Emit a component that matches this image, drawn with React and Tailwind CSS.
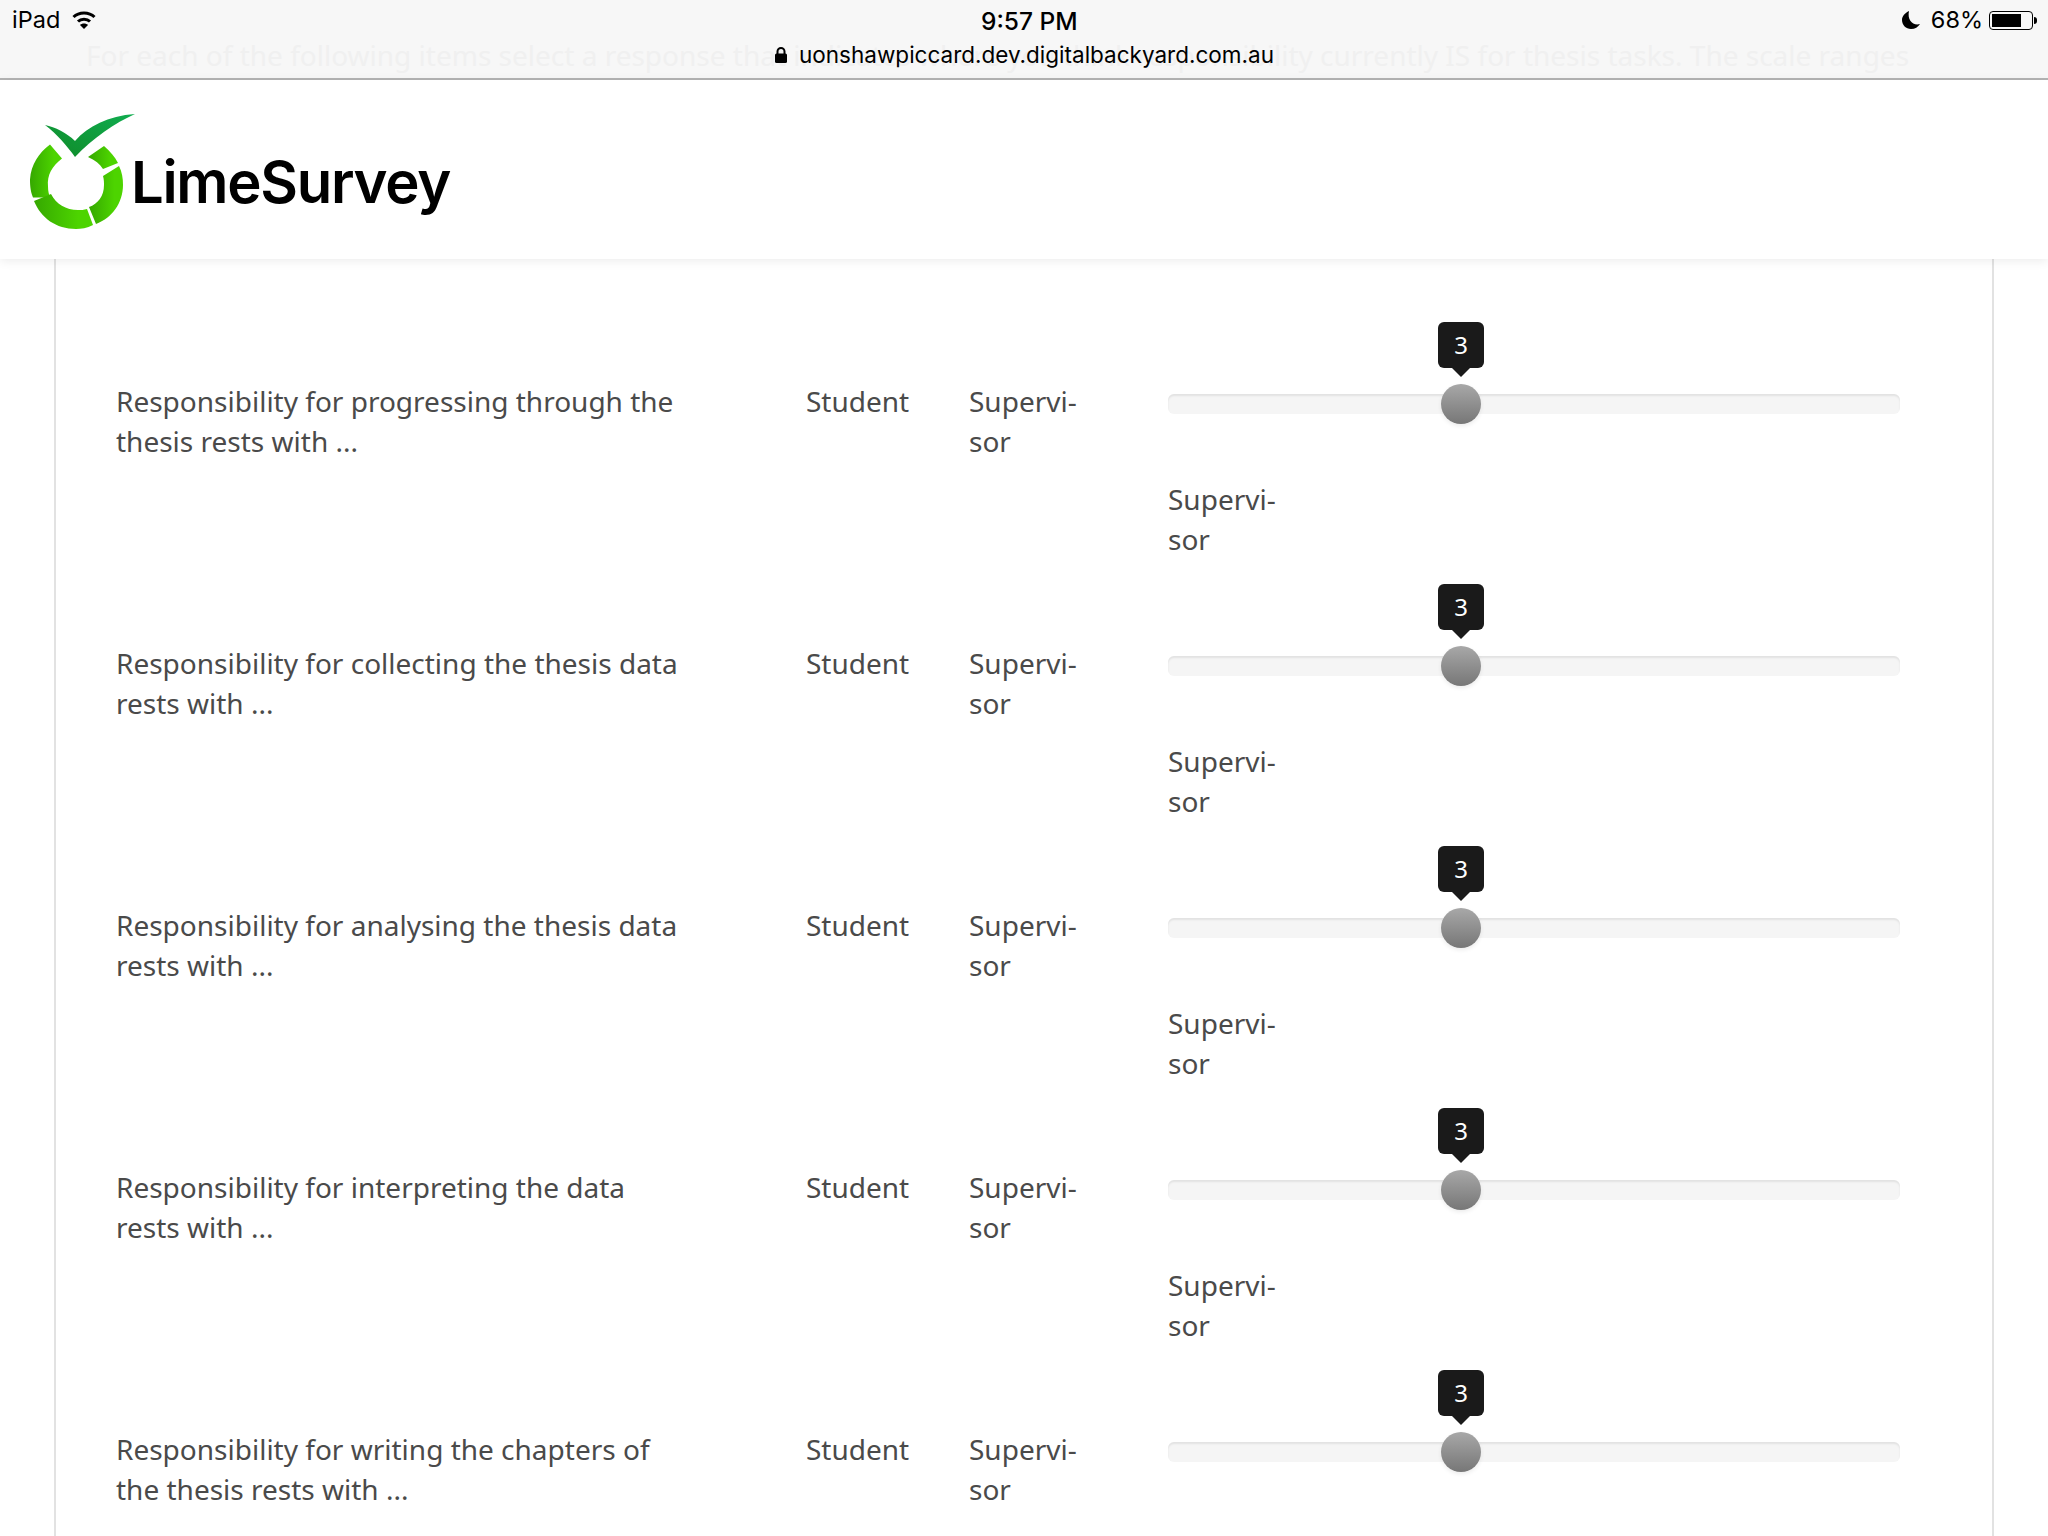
import React from 'react';

const rows = [
  'Responsibility for progressing through the thesis rests with ...',
  'Responsibility for collecting the thesis data rests with ...',
  'Responsibility for analysing the thesis data rests with ...',
  'Responsibility for interpreting the data rests with ...',
  'Responsibility for writing the chapters of the thesis rests with ...',
];

function Supervisor() {
  return <div>Supervi-<br />sor</div>;
}

function Slider() {
  return (
    <div className="relative mt-[13px] h-5 w-[732px] rounded-md bg-[#f5f5f5] shadow-[inset_0_2px_2px_rgba(0,0,0,0.08)]">
      <div className="absolute left-[270px] top-[-72px] flex h-[46px] w-[46px] items-center justify-center rounded-md bg-[#1a1a1a] text-[24px] text-white">
        3
        <div className="absolute bottom-[-9px] left-[14px] h-0 w-0 border-x-[9px] border-t-[9px] border-x-transparent border-t-[#1a1a1a]"></div>
      </div>
      <div className="absolute left-[273px] top-[-10px] h-10 w-10 rounded-full bg-gradient-to-b from-[#a8a8a8] to-[#777777] shadow-[0_2px_4px_rgba(0,0,0,0.08)]"></div>
    </div>
  );
}

function Row({ label, last }) {
  return (
    <div className="pb-[84px]">
      <div className="flex">
        <div className="w-[690px]">
          <div className="w-[570px]">{label}</div>
        </div>
        <div className="w-[163px]">Student</div>
        <div className="w-[199px]"><Supervisor /></div>
        <Slider />
      </div>
      {!last && <div className="mt-[18px] pl-[1052px]"><Supervisor /></div>}
    </div>
  );
}

function Logo() {
  return (
    <svg width="112" height="120" viewBox="28 112 112 120">
      <defs>
        <linearGradient id="ring" x1="0" y1="0" x2="1" y2="0">
          <stop offset="0%" stopColor="#35a800" />
          <stop offset="75%" stopColor="#4dd400" />
        </linearGradient>
        <linearGradient id="check" x1="0" y1="1" x2="1" y2="0">
          <stop offset="0%" stopColor="#0f8a28" />
          <stop offset="100%" stopColor="#10ad50" />
        </linearGradient>
      </defs>
      <path fill="url(#ring)" d="M50 145 L62 159 C52 167 47 175 48 187 C48 192 49 195 50 198 L33 198 C30 191 30 183 30 180 C31 165 39 153 50 145 Z" transform="translate(0,-0.5)" />
      <path fill="url(#ring)" d="M34 201 L51 194 C56 204 66 210 78 210 C81 210 84 210 87 209 L93 225 C87 228 81 229 76 229 C56 229 41 218 34 201 Z" />
      <path fill="url(#ring)" d="M89 207 C98 204 104 196 104 185 C104 183 104 179 103 176 L119 166 C122 172 123 178 123 185 C123 203 112 218 96 224 Z" />
      <path fill="url(#ring)" d="M88 157 L104 146 C110 151 115 157 118 163 L103 169 C100 164 95 160 88 157 Z" />
      <path fill="url(#check)" d="M45 125 C55 127 67 133 75 141 C88 126 108 116 135 114 C115 123 93 138 75 157 C67 146 57 134 45 125 Z" />
    </svg>
  );
}

export default function App() {
  return (
    <div className="relative h-[1536px] w-[2048px] overflow-hidden bg-white font-['Noto_Sans',sans-serif] text-[28px] leading-10 text-[#4a4a4a]">
      {/* faded page text behind the browser bar */}
      <div className="absolute left-[86px] top-[35px] z-20 whitespace-nowrap text-[28px] leading-10 text-[#f0f0f0]">
        For each of the following items select a response that indicates where you think responsibility currently IS for thesis tasks. The scale ranges
      </div>

      <div className="relative h-20 border-b-2 border-[#b4b4b4] bg-[#f7f7f7] font-['Inter',sans-serif] text-black">
        <div className="absolute inset-x-0 top-0 z-30 flex h-10 items-center justify-between pl-3 pr-[11px] text-[23.5px] leading-none">
          <div className="flex items-center gap-3">
            <span>iPad</span>
            <svg width="24" height="20" viewBox="0 0 24 20" fill="none" stroke="black" strokeWidth="3">
              <path d="M1.5 7C7 1.5 17 1.5 22.5 7" />
              <path d="M6 11.5C9 8.5 15 8.5 18 11.5" />
              <path d="M12 19 L8 15 C10 13 14 13 16 15 Z" fill="black" stroke="none" />
            </svg>
          </div>
          <div className="absolute left-[981px] top-[9px] text-[24.5px] font-medium">9:57 PM</div>
          <div className="flex items-center">
            <svg width="20" height="20" viewBox="0 0 20 20" className="mr-2.5">
              <path d="M8 1 C4 3 1 6 1 10 C1 15 5 19 10 19 C14 19 17 17 19 14 C12 16 6 10 8 1 Z" fill="black" />
            </svg>
            <span>68%</span>
            <div className="ml-1.5 flex items-center">
              <div className="h-[19px] w-[44px] rounded border border-black p-0.5">
                <div className="h-full w-[29px] bg-black"></div>
              </div>
              <div className="ml-px h-[7px] w-[3px] rounded-r-sm bg-black"></div>
            </div>
          </div>
        </div>
        <div className="absolute inset-x-0 top-[37px] z-30 flex h-9 items-center justify-center gap-[11px] text-[22.5px] leading-none">
          <svg width="14" height="18" viewBox="0 0 14 18" fill="none">
            <path d="M3.5 8V5.5a3.5 3.5 0 0 1 7 0V8" stroke="black" strokeWidth="2" />
            <rect x="1" y="7.5" width="12" height="9.5" rx="1.5" fill="black" />
          </svg>
          <span>uonshawpiccard.dev.digitalbackyard.com.au</span>
        </div>
      </div>

      <div className="relative z-10 flex h-[179px] items-start bg-white shadow-[0_2px_10px_rgba(0,0,0,0.08)]">
        <div className="ml-7 mt-[32px]"><Logo /></div>
        <div className="-ml-[9px] mt-[66px] font-['Inter',sans-serif] text-[58px] font-semibold leading-[72px] tracking-[-1.3px] text-black">LimeSurvey</div>
      </div>

      <div className="mx-[54px] w-[1940px] border-x-2 border-[#e2e2e2] pl-[60px] pt-[122px]">
        {rows.map((label, i) => <Row key={i} label={label} last={i === rows.length - 1} />)}
      </div>
    </div>
  );
}
